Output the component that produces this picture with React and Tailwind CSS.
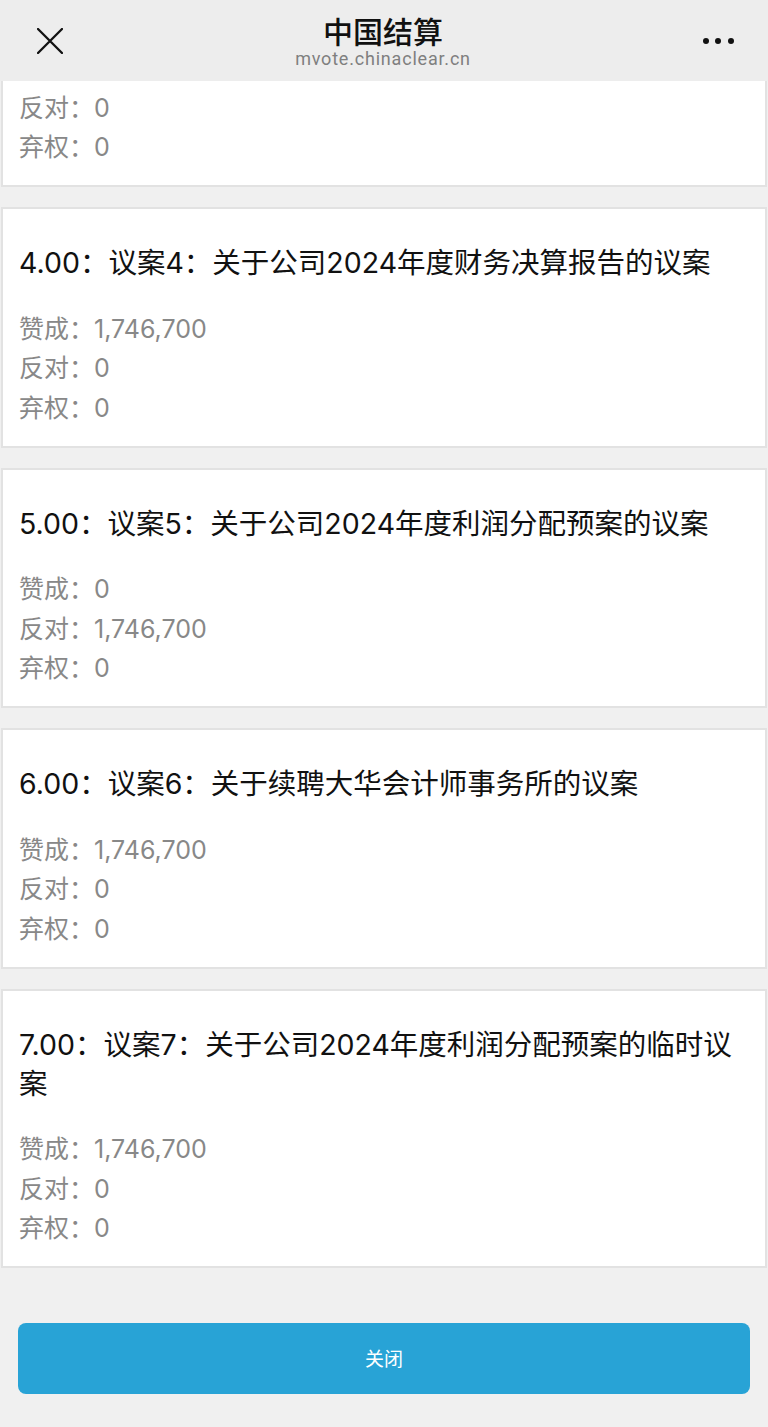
import React from 'react';

const proposals = [
  { no: '3.00', title: '议案3：关于公司2024年度财务预算报告的议案', yes: '1,746,700', no_: '0', abstain: '0' },
  { no: '4.00', title: '议案4：关于公司2024年度财务决算报告的议案', yes: '1,746,700', no_: '0', abstain: '0' },
  { no: '5.00', title: '议案5：关于公司2024年度利润分配预案的议案', yes: '0', no_: '1,746,700', abstain: '0' },
  { no: '6.00', title: '议案6：关于续聘大华会计师事务所的议案', yes: '1,746,700', no_: '0', abstain: '0' },
  { no: '7.00', title: '议案7：关于公司2024年度利润分配预案的临时议案', yes: '1,746,700', no_: '0', abstain: '0' },
];

function Card({ item }) {
  return (
    <div className="bg-white border-2 border-[#e2e2e2] mx-[1px] px-[16px] pt-[34px] pb-[17.5px]">
      <h3 className="text-[28.5px] leading-[39px] text-[#111] font-normal">
        {item.no}：{item.title}
      </h3>
      <div className="mt-[27.5px] text-[25px] leading-[39.5px] text-[#888]">
        <p>赞成：{item.yes}</p>
        <p>反对：{item.no_}</p>
        <p>弃权：{item.abstain}</p>
      </div>
    </div>
  );
}

export default function App() {
  const [first, ...rest] = proposals;

  return (
    <div className="min-h-screen bg-[#f0f0f0] font-['Inter','Noto_Sans_CJK_SC',sans-serif]">
      {/* top bar */}
      <div className="h-[81px] bg-[#ededed] flex items-center justify-between px-[37px]">
        <svg width="26" height="26" viewBox="0 0 26 26" className="shrink-0">
          <path d="M1 1 L25 25 M25 1 L1 25" stroke="#111" strokeWidth="2.3" strokeLinecap="round" />
        </svg>
        <div className="flex flex-col items-center">
          <span className="text-[30px] leading-[36px] font-medium text-[#111] font-['Noto_Sans_CJK_SC',sans-serif]">中国结算</span>
          <span className="text-[18px] leading-[22px] tracking-[0.8px] text-[#7f7f7f] font-['Roboto','Noto_Sans',sans-serif]">mvote.chinaclear.cn</span>
        </div>
        <div className="flex items-center gap-[6.5px] -mr-[3px]">
          <span className="w-[6px] h-[6px] rounded-full bg-[#111]" />
          <span className="w-[6px] h-[6px] rounded-full bg-[#111]" />
          <span className="w-[6px] h-[6px] rounded-full bg-[#111]" />
        </div>
      </div>

      {/* first card scrolled under the bar */}
      <div className="h-[106px] overflow-hidden flex flex-col justify-end">
        <Card item={first} />
      </div>

      <div className="flex flex-col gap-[20px] mt-[20px]">
        {rest.map((p) => (
          <Card key={p.no} item={p} />
        ))}
      </div>

      <div className="px-[18px] pt-[55px] pb-[33px]">
        <button className="w-full h-[71px] rounded-[8px] bg-[#28a3d6] text-white text-[19px] font-['Noto_Sans_CJK_SC',sans-serif]">
          关闭
        </button>
      </div>
    </div>
  );
}
